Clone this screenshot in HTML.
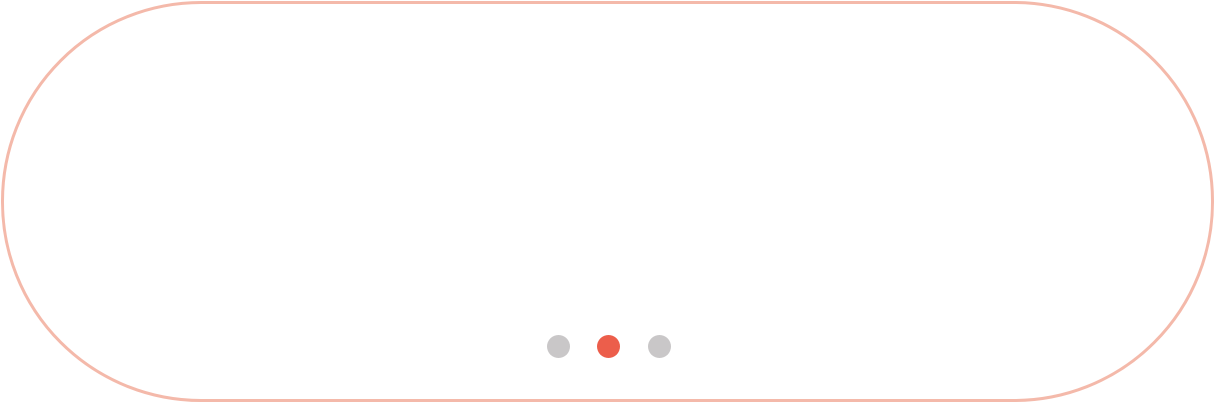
<!DOCTYPE html>
<html><head><style>
html,body{margin:0;padding:0;background:#fff;}
body{width:1216px;height:404px;position:relative;overflow:hidden;}
.pill{position:absolute;left:1px;top:1px;width:1207px;height:395px;border:3.5px solid #f4b9aa;border-radius:200px;}
.dot{position:absolute;top:335px;width:23px;height:23px;border-radius:50%;background:#c9c7c8;}
</style></head><body>
<div class="pill"></div>
<div class="dot" style="left:547px"></div>
<div class="dot" style="left:597px;background:#ec5e4b"></div>
<div class="dot" style="left:648px"></div>
</body></html>
